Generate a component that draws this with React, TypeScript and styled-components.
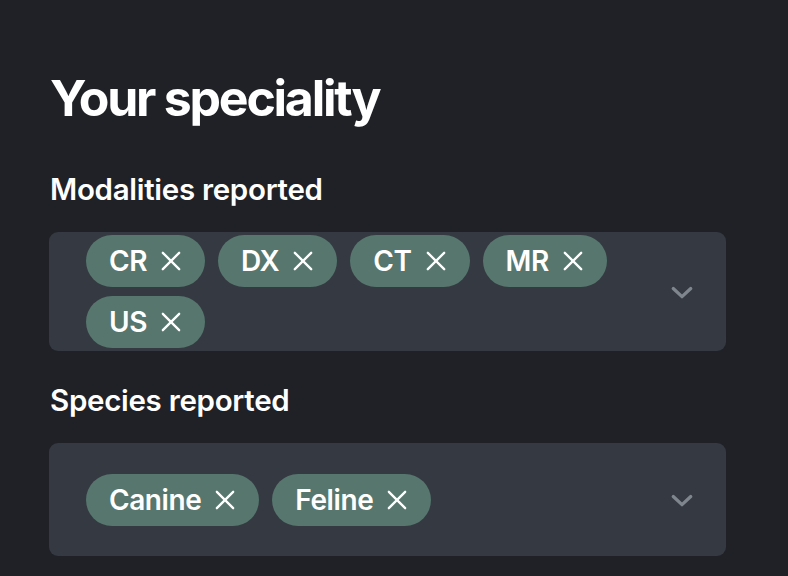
import React from 'react';
import styled, { createGlobalStyle } from 'styled-components';

const GlobalStyle = createGlobalStyle`
  html, body {
    margin: 0;
    padding: 0;
    background: #1f2126;
  }
  body {
    font-family: Inter, "Noto Sans", sans-serif;
    color: #ffffff;
    -webkit-font-smoothing: antialiased;
  }
`;

const Page = styled.div`
  width: 788px;
  height: 576px;
  box-sizing: border-box;
  padding: 66px 62px 0 49px;
  overflow: hidden;
`;

const Title = styled.h1`
  margin: 0 0 0 1px;
  font-size: 50px;
  font-weight: 650;
  line-height: 64px;
  letter-spacing: -0.045em;
`;

const Label = styled.h2`
  margin: 0 0 0 1px;
  font-size: 29.5px;
  font-weight: 600;
  line-height: 36px;
  letter-spacing: -0.01em;
`;

const Field = styled.div<{ $top: number }>`
  display: flex;
  flex-direction: column;
  gap: 25px;
  margin-top: ${(p) => p.$top}px;
`;

const SelectBox = styled.div`
  display: flex;
  align-items: center;
  min-height: 113px;
  box-sizing: border-box;
  padding: 3px 0 3px 37px;
  background: #353941;
  border-radius: 9px;
`;

const ChipList = styled.div`
  flex: 1;
  display: flex;
  flex-wrap: wrap;
  gap: 9px 13px;
`;

const Chip = styled.span`
  display: inline-flex;
  align-items: center;
  gap: 10px;
  height: 52px;
  padding: 0 20px 0 23px;
  background: #56766e;
  border-radius: 26px;
  font-size: 28px;
  font-weight: 600;
  letter-spacing: -0.015em;
  color: #ffffff;
`;

const Remove = styled.svg`
  width: 28px;
  height: 28px;
  flex: none;
`;

const Chevron = styled.svg`
  width: 28px;
  height: 28px;
  margin: 0 30px 0 20px;
  flex: none;
`;

const CloseIcon = () => (
  <Remove viewBox="0 0 24 24" fill="none" stroke="#ffffff" strokeWidth={2} strokeLinecap="round">
    <path d="M5 5L19 19M19 5L5 19" />
  </Remove>
);

const ChevronIcon = () => (
  <Chevron viewBox="0 0 24 24" fill="none" stroke="#80868e" strokeWidth={2.8} strokeLinecap="round" strokeLinejoin="round">
    <path d="M4.5 9l7.5 7 7.5-7" />
  </Chevron>
);

interface MultiSelectProps {
  label: string;
  values: string[];
  top: number;
}

const MultiSelect: React.FC<MultiSelectProps> = ({ label, values, top }) => (
  <Field $top={top}>
    <Label>{label}</Label>
    <SelectBox>
      <ChipList>
        {values.map((v) => (
          <Chip key={v}>
            {v}
            <CloseIcon />
          </Chip>
        ))}
      </ChipList>
      <ChevronIcon />
    </SelectBox>
  </Field>
);

const App: React.FC = () => (
  <>
    <GlobalStyle />
    <Page>
      <Title>Your speciality</Title>
      <MultiSelect label="Modalities reported" values={['CR', 'DX', 'CT', 'MR', 'US']} top={41} />
      <MultiSelect label="Species reported" values={['Canine', 'Feline']} top={31} />
    </Page>
  </>
);

export default App;
